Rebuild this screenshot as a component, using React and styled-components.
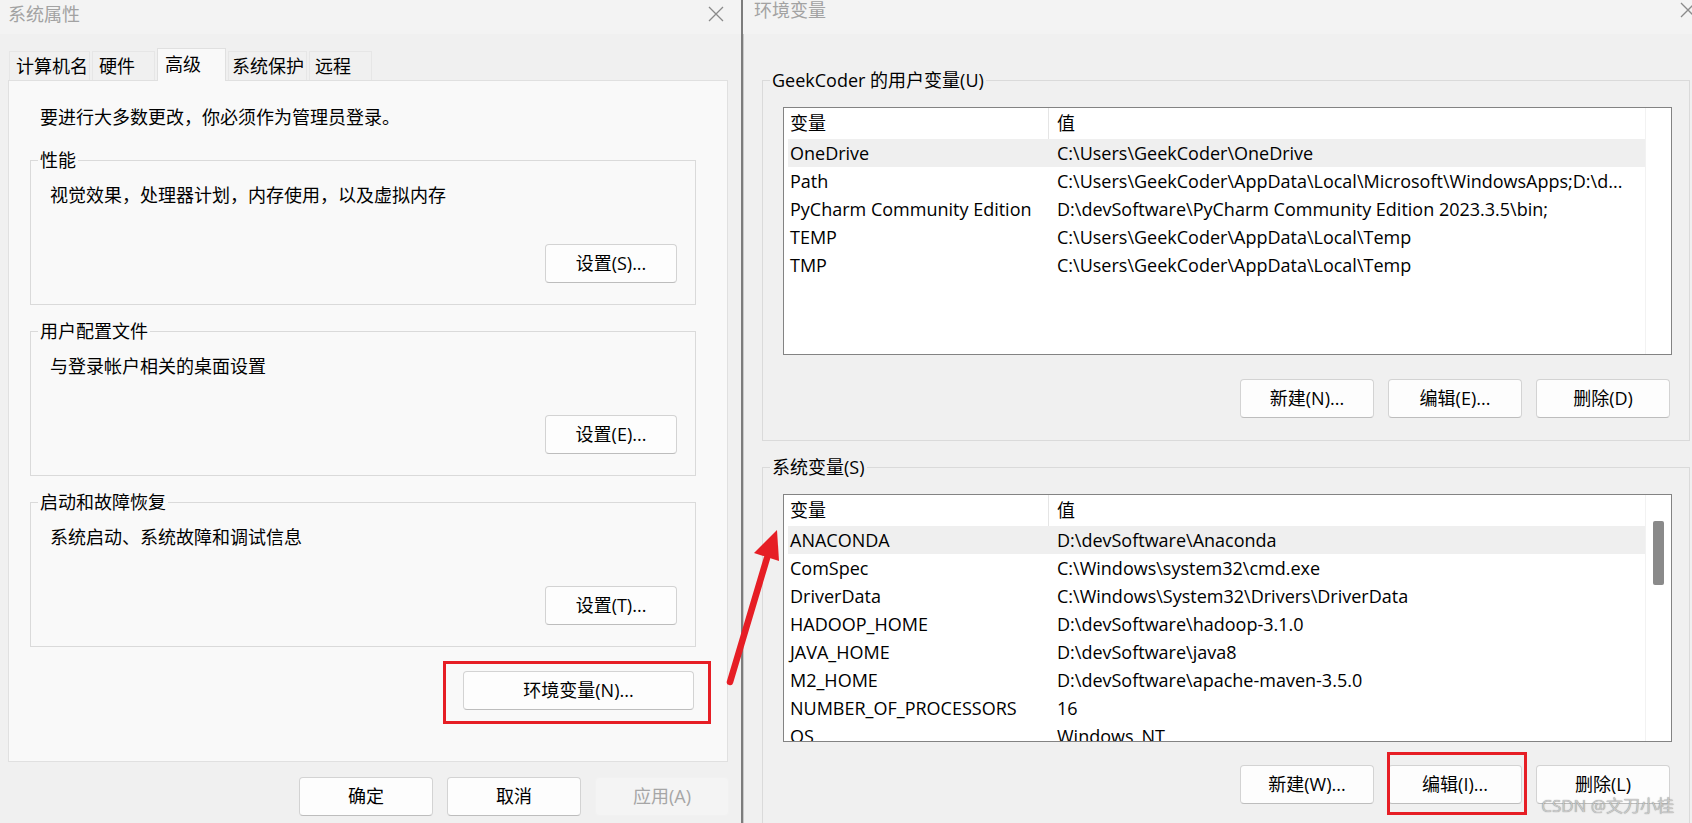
import React from 'react';
import styled, { createGlobalStyle } from 'styled-components';

const GlobalStyle = createGlobalStyle`
  html, body { margin: 0; padding: 0; }
  body {
    width: 1692px;
    height: 823px;
    overflow: hidden;
    background: #f0f0f0;
    font-family: "Open Sans", "Noto Sans CJK SC", sans-serif;
    font-size: 18px;
    color: #000;
  }
  * { box-sizing: border-box; }
`;

const Screen = styled.div`
  position: relative;
  display: flex;
  width: 1692px;
  height: 823px;
  overflow: hidden;
`;

/* ---------- shared window parts ---------- */
const TitleBar = styled.div`
  height: 34px;
  flex: none;
  display: flex;
  justify-content: space-between;
  align-items: flex-start;
  background: #f3f3f3;
  padding-left: ${p => p.$pl}px;
`;

const TitleText = styled.div`
  color: #a2a2a2;
  line-height: ${p => p.$lh}px;
  font-size: 18px;
  white-space: nowrap;
`;

const CloseIcon = styled.svg`
  width: 16px;
  height: 16px;
  flex: none;
  margin-top: ${p => p.$mt}px;
  margin-right: ${p => p.$mr}px;
`;

const Close = ({ mt, mr }) => (
  <CloseIcon $mt={mt} $mr={mr} viewBox="0 0 16 16">
    <path d="M1 1 L15 15 M15 1 L1 15" stroke="#8a8a8a" strokeWidth="1.3" fill="none" />
  </CloseIcon>
);

const Button = styled.button`
  flex: none;
  width: ${p => p.$w || 134}px;
  height: 39px;
  padding: 0;
  font-family: inherit;
  font-size: 18px;
  line-height: 37px;
  text-align: center;
  color: ${p => (p.disabled ? '#a6a6a6' : '#000')};
  background: ${p => (p.disabled ? '#f4f4f4' : '#fdfdfd')};
  border: 1px solid ${p => (p.disabled ? '#f1f1f1' : '#d3d3d3')};
  border-bottom-color: ${p => (p.disabled ? '#f1f1f1' : '#bdbdbd')};
  border-radius: 4px;
  white-space: nowrap;
`;

const ButtonRow = styled.div`
  display: flex;
  justify-content: flex-end;
  gap: 14px;
  margin-top: ${p => p.$mt}px;
  margin-right: ${p => p.$mr || 0}px;
`;

const Group = styled.fieldset`
  margin: 0;
  padding: 0;
  min-width: 0;
  border: 1px solid #dadada;
`;

const Legend = styled.legend`
  margin-left: 7px;
  padding: 0 2px;
  line-height: 24px;
  font-size: 18px;
`;

const Marked = styled.div`
  position: relative;
`;

const RedMark = styled.div`
  position: absolute;
  left: ${p => p.$l}px;
  right: ${p => p.$r}px;
  top: ${p => p.$t}px;
  bottom: ${p => p.$b}px;
  border: 3px solid #e61e25;
  pointer-events: none;
`;

/* ---------- left window ---------- */
const LeftWindow = styled.div`
  width: 741px;
  flex: none;
  display: flex;
  flex-direction: column;
  background: #f0f0f0;
`;

const TabStrip = styled.div`
  display: flex;
  align-items: flex-end;
  gap: 2px;
  height: 32px;
  margin: 14px 0 0 9px;
  position: relative;
  z-index: 1;
`;

const Tab = styled.div`
  width: ${p => p.$w}px;
  height: ${p => (p.$active ? 33 : 29)}px;
  margin-bottom: ${p => (p.$active ? -1 : 0)}px;
  padding-left: ${p => p.$pl}px;
  line-height: ${p => (p.$active ? 30 : 29)}px;
  font-size: 18px;
  background: ${p => (p.$active ? '#f9f9f9' : '#f0f0f0')};
  border: 1px solid ${p => (p.$active ? '#e0e0e0' : '#e6e6e6')};
  border-bottom: none;
  white-space: nowrap;
`;

const TabPanel = styled.div`
  height: 682px;
  margin: 0 13px 0 8px;
  padding: 24px 31px 0 21px;
  background: #f9f9f9;
  border: 1px solid #e0e0e0;
  display: flex;
  flex-direction: column;
`;

const Notice = styled.div`
  line-height: 24px;
  margin: 0 0 19px 10px;
  white-space: nowrap;
`;

const GroupStack = styled.div`
  display: flex;
  flex-direction: column;
  gap: 14px;
`;

const GroupBody = styled.div`
  padding: 11px 18px 21px 19px;
`;

const Desc = styled.div`
  line-height: 24px;
  white-space: nowrap;
`;

const EnvRow = styled.div`
  display: flex;
  justify-content: flex-end;
  margin-top: 24px;
  margin-right: 2px;
`;

const Footer = styled.div`
  display: flex;
  justify-content: flex-end;
  gap: 14px;
  margin-top: 15px;
  padding-right: 12px;
`;

/* ---------- right window ---------- */
const RightWindow = styled.div`
  flex: 1;
  display: flex;
  flex-direction: column;
  background: #f0f0f0;
  border-left: 2px solid #7c7c7c;
  box-shadow: inset 1px 0 0 #c9c9c9;
  min-width: 0;
`;

const RightBody = styled.div`
  padding: 34px 2px 0 19px;
  display: flex;
  flex-direction: column;
  gap: 14px;
`;

const VarBody = styled.div`
  padding: 15px 17px ${p => p.$pb}px 20px;
`;

const ListBox = styled.div`
  height: 248px;
  display: flex;
  background: #fff;
  border: 1px solid #838383;
  overflow: hidden;
`;

const ListRows = styled.div`
  flex: 1;
  min-width: 0;
  padding-left: 4px;
  overflow: hidden;
`;

const ListRow = styled.div`
  display: grid;
  grid-template-columns: 261px 1fr;
  height: ${p => p.$h}px;
  line-height: ${p => p.$h}px;
  background: ${p => (p.$selected ? '#efefef' : 'transparent')};
`;

const NameCell = styled.div`
  padding-left: 2px;
  white-space: nowrap;
  overflow: hidden;
  border-right: 1px solid ${p => (p.$header ? '#e5e5e5' : 'transparent')};
`;

const ValueCell = styled.div`
  padding-left: 8px;
  white-space: nowrap;
  overflow: hidden;
`;

const Gutter = styled.div`
  width: 26px;
  flex: none;
  border-left: 1px solid #f2f2f2;
  padding: 26px 0 0 7px;
`;

const Thumb = styled.div`
  width: 11px;
  height: 64px;
  background: #8a8a8a;
  border-radius: 2px;
`;

/* ---------- overlays ---------- */
const ArrowSvg = styled.svg`
  position: absolute;
  left: 720px;
  top: 520px;
  width: 70px;
  height: 175px;
  pointer-events: none;
`;

const Watermark = styled.div`
  position: absolute;
  right: 18px;
  bottom: 7px;
  font-family: "Open Sans", "Noto Sans CJK SC", sans-serif;
  font-size: 17px;
  line-height: 20px;
  color: rgba(205, 205, 205, 0.95);
  text-shadow: 0 0 1px rgba(70, 70, 70, 0.7);
  white-space: nowrap;
  pointer-events: none;
`;

/* ---------- data ---------- */
const tabs = [
  { label: '计算机名', w: 81, pl: 6 },
  { label: '硬件', w: 63, pl: 6 },
  { label: '高级', w: 69, pl: 7, active: true },
  { label: '系统保护', w: 79, pl: 3 },
  { label: '远程', w: 63, pl: 5 },
];

const groups = [
  { legend: '性能', desc: '视觉效果，处理器计划，内存使用，以及虚拟内存', btn: '设置(S)...' },
  { legend: '用户配置文件', desc: '与登录帐户相关的桌面设置', btn: '设置(E)...' },
  { legend: '启动和故障恢复', desc: '系统启动、系统故障和调试信息', btn: '设置(T)...' },
];

const userVars = [
  ['OneDrive', 'C:\\Users\\GeekCoder\\OneDrive'],
  ['Path', 'C:\\Users\\GeekCoder\\AppData\\Local\\Microsoft\\WindowsApps;D:\\d...'],
  ['PyCharm Community Edition', 'D:\\devSoftware\\PyCharm Community Edition 2023.3.5\\bin;'],
  ['TEMP', 'C:\\Users\\GeekCoder\\AppData\\Local\\Temp'],
  ['TMP', 'C:\\Users\\GeekCoder\\AppData\\Local\\Temp'],
];

const sysVars = [
  ['ANACONDA', 'D:\\devSoftware\\Anaconda'],
  ['ComSpec', 'C:\\Windows\\system32\\cmd.exe'],
  ['DriverData', 'C:\\Windows\\System32\\Drivers\\DriverData'],
  ['HADOOP_HOME', 'D:\\devSoftware\\hadoop-3.1.0'],
  ['JAVA_HOME', 'D:\\devSoftware\\java8'],
  ['M2_HOME', 'D:\\devSoftware\\apache-maven-3.5.0'],
  ['NUMBER_OF_PROCESSORS', '16'],
  ['OS', 'Windows_NT'],
];

const VarList = ({ rows, scroll }) => (
  <ListBox>
    <ListRows>
      <ListRow $h={31}>
        <NameCell $header>变量</NameCell>
        <ValueCell>值</ValueCell>
      </ListRow>
      {rows.map(([n, v], i) => (
        <ListRow key={n} $h={28} $selected={i === 0}>
          <NameCell>{n}</NameCell>
          <ValueCell>{v}</ValueCell>
        </ListRow>
      ))}
    </ListRows>
    <Gutter>{scroll && <Thumb />}</Gutter>
  </ListBox>
);

export default function App() {
  return (
    <>
      <GlobalStyle />
      <Screen>
        <LeftWindow>
          <TitleBar $pl={8}>
            <TitleText $lh={28}>系统属性</TitleText>
            <Close mt={6} mr={17} />
          </TitleBar>
          <TabStrip>
            {tabs.map(t => (
              <Tab key={t.label} $w={t.w} $pl={t.pl} $active={t.active}>
                {t.label}
              </Tab>
            ))}
          </TabStrip>
          <TabPanel>
            <Notice>要进行大多数更改，你必须作为管理员登录。</Notice>
            <GroupStack>
              {groups.map(g => (
                <Group key={g.legend}>
                  <Legend>{g.legend}</Legend>
                  <GroupBody>
                    <Desc>{g.desc}</Desc>
                    <ButtonRow $mt={37}>
                      <Button $w={132}>{g.btn}</Button>
                    </ButtonRow>
                  </GroupBody>
                </Group>
              ))}
            </GroupStack>
            <EnvRow>
              <Marked>
                <Button $w={231}>环境变量(N)...</Button>
                <RedMark $l={-20} $r={-17} $t={-10} $b={-14} />
              </Marked>
            </EnvRow>
          </TabPanel>
          <Footer>
            <Button>确定</Button>
            <Button>取消</Button>
            <Button disabled>应用(A)</Button>
          </Footer>
        </LeftWindow>

        <RightWindow>
          <TitleBar $pl={11}>
            <TitleText $lh={20}>环境变量</TitleText>
            <Close mt={2} mr={-4} />
          </TitleBar>
          <RightBody>
            <Group>
              <Legend>GeekCoder 的用户变量(U)</Legend>
              <VarBody $pb={22}>
                <VarList rows={userVars} />
                <ButtonRow $mt={24} $mr={2}>
                  <Button>新建(N)...</Button>
                  <Button>编辑(E)...</Button>
                  <Button>删除(D)</Button>
                </ButtonRow>
              </VarBody>
            </Group>
            <Group>
              <Legend>系统变量(S)</Legend>
              <VarBody $pb={22}>
                <VarList rows={sysVars} scroll />
                <ButtonRow $mt={23} $mr={2}>
                  <Button>新建(W)...</Button>
                  <Marked>
                    <Button>编辑(I)...</Button>
                    <RedMark $l={-1} $r={-5} $t={-13} $b={-11} />
                  </Marked>
                  <Button>删除(L)</Button>
                </ButtonRow>
              </VarBody>
            </Group>
          </RightBody>
        </RightWindow>

        <ArrowSvg viewBox="0 0 70 175">
          <line x1="10" y1="162" x2="47" y2="38" stroke="#e61e25" strokeWidth="6.5" strokeLinecap="round" />
          <polygon points="57,10 34,33 59,41" fill="#e61e25" />
        </ArrowSvg>
        <Watermark>CSDN @文刀小桂</Watermark>
      </Screen>
    </>
  );
}
